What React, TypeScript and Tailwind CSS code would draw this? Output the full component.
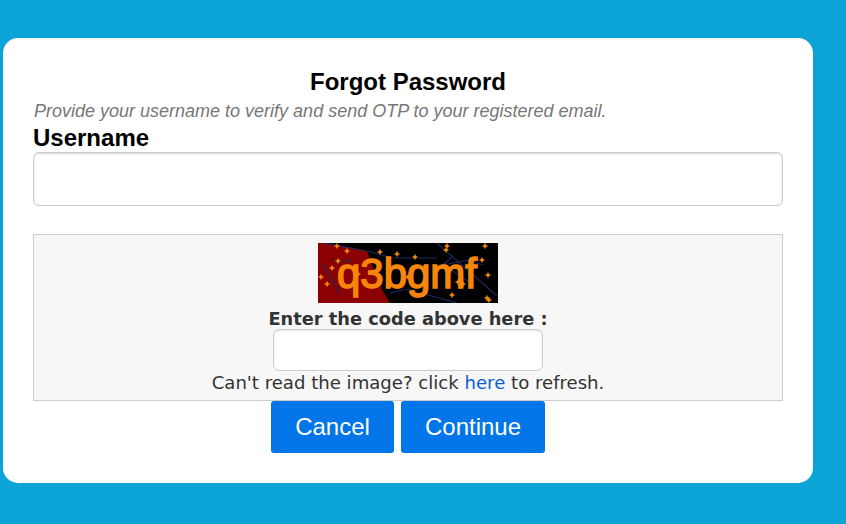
const stars: [number, number][] = [
  [19, 3], [29, 8], [62, 9], [79, 11], [97, 14], [20, 18], [14, 25], [3, 34], [9, 41], [40, 31],
  [129, 3], [128, 7], [167, 3], [164, 17], [170, 32], [90, 34], [134, 52], [169, 55], [171, 57], [140, 39], [145, 41],
];

function Captcha() {
  return (
    <svg width="180" height="60" viewBox="0 0 180 60" className="block">
      <rect width="180" height="60" fill="#000" />
      <path d="M0 0 L15 1 L49 8 L62 43 L72 60 L0 60 Z" fill="#8b0000" />
      <path d="M5 0 L49 8 L75 15 L119 15 M5 21 L22 51 M14 18 L35 18 M72 50 L89 46 L139 60 M119 0 L179 53 M135 13 L125 22 L150 17 L165 22 M125 22 L156 42" fill="none" stroke="#1b2a5c" strokeWidth="1.2" />
      {stars.map(([x, y], i) => (
        <path key={i} d={`M${x} ${y - 3.2} L${x + 1} ${y - 1} L${x + 3.2} ${y} L${x + 1} ${y + 1} L${x} ${y + 3.2} L${x - 1} ${y + 1} L${x - 3.2} ${y} L${x - 1} ${y - 1} Z`} fill="#f08a10" />
      ))}
      <text x="19" y="45" fontFamily="'Liberation Sans', sans-serif" fontSize="43" fill="#f6860a" stroke="#f6860a" strokeWidth="1.6" textLength="140" lengthAdjust="spacingAndGlyphs">q3bgmf</text>
    </svg>
  );
}

export default function App() {
  return (
    <div className="h-[524px] w-[846px] overflow-hidden bg-[#0ca3d6] pt-[38px] pl-[3px] font-['Liberation_Sans',Arial,sans-serif]">
      <div className="h-[445px] w-[810px] rounded-[15px] bg-white px-[30px] pt-[30px]">
        <h1 className="text-center text-[24px] leading-[28px] font-bold text-black">Forgot Password</h1>
        <p className="mt-[5px] pl-[1px] text-[18px] leading-[20px] text-[#777] italic">Provide your username to verify and send OTP to your registered email.</p>
        <label className="mt-[3px] block text-[24px] leading-[28px] font-bold text-black">Username</label>
        <input className="block h-[54px] w-[750px] rounded-[6px] border border-[#ccc] bg-white shadow-[inset_0_1px_2px_rgba(0,0,0,0.15)]" />
        <div className="mt-[28px] flex h-[167px] w-[750px] flex-col items-center border border-[#ccc] bg-[#f7f7f7] pt-[8px] font-['DejaVu_Sans',Verdana,sans-serif] text-[#333]">
          <Captcha />
          <div className="mt-[6px] text-[17.8px] leading-[20px] font-bold">Enter the code above here :</div>
          <input className="block h-[42px] w-[270px] rounded-[6px] border border-[#ccc] bg-white shadow-[inset_0_1px_2px_rgba(0,0,0,0.1)]" />
          <div className="mt-[1px] text-[18.1px] leading-[22px]">
            Can't read the image? click <a className="text-[#0b5ed7]">here</a> to refresh.
          </div>
        </div>
        <div className="flex justify-center gap-[7px]">
          <button className="h-[52px] w-[123px] rounded-[3px] bg-[#0275e8] text-[24px] text-white">Cancel</button>
          <button className="h-[52px] w-[144px] rounded-[3px] bg-[#0275e8] text-[24px] text-white">Continue</button>
        </div>
      </div>
    </div>
  );
}
